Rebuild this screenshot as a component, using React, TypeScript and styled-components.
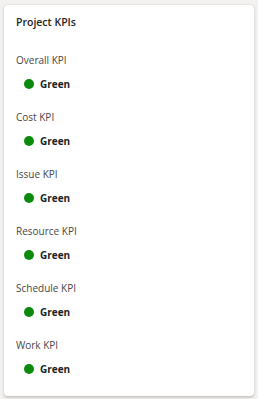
import React from "react";
import styled, { createGlobalStyle } from "styled-components";

const Global = createGlobalStyle`
  html, body { margin: 0; padding: 0; background: #f3f2f1; }
  body { font-family: "Segoe UI", "Open Sans", "Noto Sans", sans-serif; }
`;

const Page = styled.div`
  padding: 5px 4px 3px 4px;
  box-sizing: border-box;
  width: 258px;
  height: 399px;
`;

const Card = styled.section`
  box-sizing: border-box;
  height: 391px;
  background: #ffffff;
  border-radius: 4px;
  box-shadow: 0 0.6px 1.8px rgba(0, 0, 0, 0.11), 0 1.6px 3.6px rgba(0, 0, 0, 0.13);
  padding: 10px 12px 20px 12px;
  display: flex;
  flex-direction: column;
`;

const Title = styled.h2`
  margin: 0 0 24px 0;
  font-size: 10.5px;
  line-height: 14px;
  font-weight: 600;
  color: #252423;
`;

const List = styled.div`
  display: flex;
  flex-direction: column;
  gap: 19px;
`;

const Item = styled.div`
  display: flex;
  flex-direction: column;
  gap: 10px;
`;

const Label = styled.div`
  font-size: 10px;
  line-height: 14px;
  color: #484644;
`;

const Status = styled.div`
  display: flex;
  align-items: center;
  gap: 6px;
  padding-left: 8px;
  height: 14px;
`;

const Dot = styled.span<{ $color: string }>`
  width: 10px;
  height: 10px;
  border-radius: 50%;
  background: ${(p) => p.$color};
  flex: none;
`;

const StatusText = styled.span`
  font-size: 10px;
  line-height: 14px;
  font-weight: 700;
  color: #201f1e;
`;

const kpis = ["Overall KPI", "Cost KPI", "Issue KPI", "Resource KPI", "Schedule KPI", "Work KPI"];

export default function App() {
  return (
    <>
      <Global />
      <Page>
        <Card>
          <Title>Project KPIs</Title>
          <List>
            {kpis.map((k) => (
              <Item key={k}>
                <Label>{k}</Label>
                <Status>
                  <Dot $color="#0b8a0b" />
                  <StatusText>Green</StatusText>
                </Status>
              </Item>
            ))}
          </List>
        </Card>
      </Page>
    </>
  );
}
